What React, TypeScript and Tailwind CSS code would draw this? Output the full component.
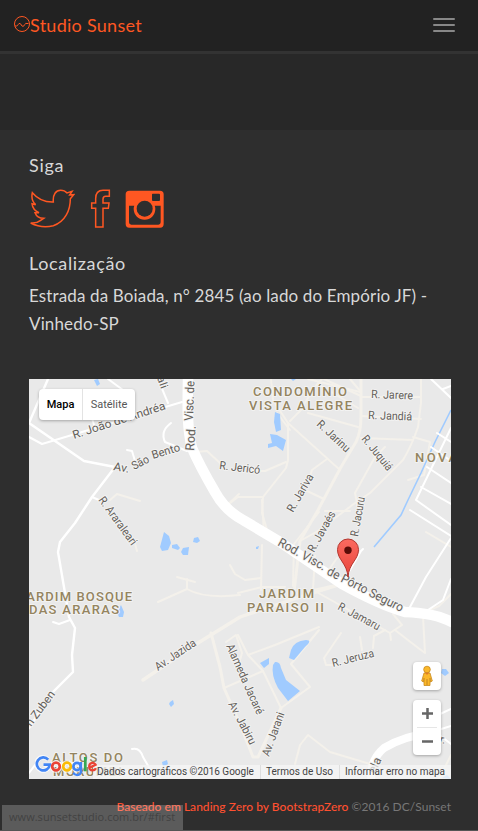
import React from 'react';

type Line = { d: string; w?: number };

const localRoads: Line[] = [
  { d: 'M361 379V417Q361 432 356 442L341 467L318 510L300 541L294 592', w: 3 },
  { d: 'M271 379L273 400L288 423V460L286 468L263 497H238L225 507M263 497L262 513L270 540' },
  { d: 'M288 423L340 470M277 413L290 430' },
  { d: 'M308 379L360 392M300 410L318 383L322 379M308 413L358 427M318 384L358 408M290 421L302 409' },
  { d: 'M421 379V403L418 427Q412 445 403 460L370 493L355 503L318 531L300 541' },
  { d: 'M361 397H421M361 416L421 419M361 438L413 440M413 437L430 442L424 475L408 480' },
  { d: 'M375 457L355 493L358 508M375 457L385 447' },
  { d: 'M327 459L312 470L308 483M305 490L324 499' },
  { d: 'M324 379L361 396M250 471H265L286 462' },
  { d: 'M262 500L264 533M262 545L261 590M319 512L294 544L293 586' },
  { d: 'M325 511H350M315 556L313 590L345 583M328 571L337 558' },
  { d: 'M143 680L198 643L240 617L300 597L345 583', w: 3.4 },
  { d: 'M158 602L187 589Q204 599 240 595M187 589V579M177 577L195 582' },
  { d: 'M230 565L235 574L245 580L261 578M238 593L262 587L285 587' },
  { d: 'M110 500L117 494L140 501M134 540L137 551' },
  { d: 'M195 452L207 451L221 464M225 507L239 494' },
  { d: 'M313 590L390 633L402 625M402 625L393 614M390 633L391 640' },
  { d: 'M423 616L425 653Q422 651 395 630M451 594L439 606L425 612' },
  { d: 'M211 633L220 667L224 688L240 724L253 757H258L281 708', w: 3 },
  { d: 'M224 688L263 671L281 708L310 687L291 664L319 630' },
  { d: 'M238 635L248 655L263 671M248 655L275 645L319 627' },
  { d: 'M226 642L236 635L242 653L238 667' },
  { d: 'M341 633L324 658L326 665H338M360 637L362 650M373 648L374 636L385 630' },
  { d: 'M295 764L300 745L308 735L330 752L370 764' },
  { d: 'M426 532L451 547M439 779L451 755M350 379L361 392' },
];

const cityRoads: Line[] = [
  { d: 'M48 379L29 423L84 461L115 467L92 497L75 523L60 542L58 552L65 593L69 617L75 628L72 655L73 672L53 692L29 728', w: 2.4 },
  { d: 'M29 437L42 444L182 402' },
  { d: 'M108 379L127 393M158 379L168 403M91 415L95 428' },
  { d: 'M171 423Q160 431 165 442L187 451M127 450L132 451L135 461' },
  { d: 'M92 497L99 500M53 622L59 624L70 620' },
  { d: 'M132 749Q140 747 143 757L150 769L160 779M29 773L39 760' },
  { d: 'M431 379L451 398M443 389L451 386' },
  { d: 'M451 428L416 500L451 525M437 433L451 442M431 447L451 461M427 467L451 483M421 487L451 504' },
  { d: 'M410 510L451 536M451 538L426 577L410 607M451 579L443 600L425 612' },
  { d: 'M438 715L451 709M438 730L451 726M438 734L451 744' },
  { d: 'M343 582L361 551L363 549' },
];

const lakes: string[] = [
  'M275 412L280 414L281 430L276 432L274 422Z',
  'M270 434L277 435L286 440L283 451L276 446L268 448L268 444L272 443Z',
  'M291 379H296L293 381Z',
  'M94 380L98 379L100 384L97 386Z',
  'M164 532L169 536L171 543L168 550L162 551L160 547Z',
  'M172 545L177 544L180 548L178 550L172 548Z',
  'M183 548L189 547L188 555H183L181 552Z',
  'M194 538L198 537L200 541L197 543L193 542Z',
  'M121 605L124 612L123 617H119L117 612Z',
  'M256 547L259 546L258 549H256Z',
  'M275 662Q280 661 281 668L286 680L300 691L288 701L278 688Q271 675 273 665Z',
  'M291 650Q294 641 306 640Q313 640 305 647L294 660L289 658Z',
  'M260 663L269 658L269 664L264 668Z',
  'M170 702L173 700L174 704L171 707L169 704Z',
  'M162 762L167 760L168 764L163 767Z',
  'M442 669L446 669L449 673L445 676L441 673Z',
  'M442 778L447 775L451 779Z',
];

type Label = { t: string; x: number; y: number; r?: number; l: number; s?: number };

const streets: Label[] = [
  { t: 'R. João de Andréa', x: 74, y: 439, r: -18, l: 97 },
  { t: 'Av.', x: 113, y: 470, r: 10, l: 16 },
  { t: 'São', x: 134, y: 470, r: -27, l: 18 },
  { t: 'Bento', x: 153, y: 459, r: -17, l: 29 },
  { t: 'R. Jericó', x: 219, y: 469, r: 7, l: 41 },
  { t: 'R. Jarere', x: 371, y: 398, r: 2, l: 42 },
  { t: 'R. Jandiá', x: 368, y: 419, r: 2, l: 44 },
  { t: 'R. Jarinu', x: 316, y: 425, r: 43, l: 41 },
  { t: 'R. Juquiá', x: 361, y: 439, r: 51, l: 42 },
  { t: 'R. Jariva', x: 293, y: 513, r: -60, l: 42 },
  { t: 'R. Javaés', x: 314, y: 553, r: -61, l: 45 },
  { t: 'R. Jacuru', x: 358, y: 537, r: -80, l: 40 },
  { t: 'R. Araraleari', x: 98, y: 500, r: 54, l: 57 },
  { t: 'R. Jamaru', x: 337, y: 609, r: 28, l: 46 },
  { t: 'R. Jeruza', x: 333, y: 667, r: -14, l: 43 },
  { t: 'Av. Jazida', x: 158, y: 671, r: -34, l: 47 },
  { t: 'Alameda Jacaré', x: 226, y: 646, r: 66, l: 76 },
  { t: 'Av. Jabiru', x: 228, y: 704, r: 62, l: 47 },
  { t: 'Av. Jarani', x: 269, y: 757, r: -70, l: 46 },
  { t: 'n Zuben', x: 31, y: 727, r: -53, l: 41 },
  { t: 'Visc. de', x: 193, y: 421, r: -88, l: 40, s: 12.5 },
  { t: 'Rod.', x: 194, y: 451, r: -86, l: 25, s: 12.5 },
  { t: 'Rod. Visc.', x: 277, y: 545, r: 29, l: 53, s: 12.5 },
  { t: 'de Pôrto Seguro', x: 326, y: 574, r: 27, l: 84, s: 12.5 },
];

const districts: Label[] = [
  { t: 'CONDOMÍNIO', x: 253, y: 396, l: 94 },
  { t: 'VISTA ALEGRE', x: 249, y: 409.5, l: 103 },
  { t: 'NOVA', x: 415, y: 462, l: 42 },
  { t: 'JARDIM', x: 259, y: 598, l: 55 },
  { t: 'PARAISO II', x: 247, y: 611.5, l: 77 },
  { t: 'JARDIM BOSQUE', x: 18, y: 600.5, l: 114 },
  { t: 'DAS ARARAS', x: 29, y: 613.5, l: 90 },
  { t: 'ALTOS DO', x: 52, y: 761.5, l: 71 },
  { t: 'MORUMBI', x: 53, y: 775.5, l: 69 },
];

function MapCanvas() {
  return (
    <svg viewBox="29 379 422 400" className="block h-full w-full" fontFamily="Roboto, sans-serif">
      <rect x="29" y="379" width="422" height="400" fill="#e9e9e9" />
      <g fill="none" stroke="#f4f1eb" strokeLinejoin="round" strokeLinecap="round">
        {localRoads.map((r) => <path key={r.d} d={r.d} strokeWidth={r.w ?? 2} />)}
      </g>
      <g fill="#a0cbff">{lakes.map((d) => <path key={d} d={d} />)}</g>
      <path d="M451 410L435 442L421 473L408 500L401 515L374 547" fill="none" stroke="#a0cbff" strokeWidth="1.6" />
      <g fill="none" stroke="#fff" strokeLinejoin="round" strokeLinecap="round">
        {cityRoads.map((r) => <path key={r.d} d={r.d} strokeWidth={r.w ?? 2} />)}
        <path d="M188 377C188 397 186 425 192 448C198 462 208 480 215 492C222 505 232 514 243 520L280 542L342 584Q380 605 405 612Q435 613 452 622" strokeWidth="10.5" />
        <path d="M371 779Q370 760 384 748Q404 736 430 733" strokeWidth="8" />
      </g>
      <g fontSize="11" fill="#64605a" stroke="#f3f3f2" strokeWidth="2" strokeLinejoin="round" paintOrder="stroke">
        {streets.map((s) => (
          <text key={s.t} x={s.x} y={s.y} textLength={s.l} lengthAdjust="spacingAndGlyphs" fontSize={s.s ?? 11.5} transform={`rotate(${s.r ?? 0} ${s.x} ${s.y})`}>{s.t}</text>
        ))}
        <text x="375" y="774" fontSize="12" textLength="16" transform="rotate(-65 375 774)">ela</text>
        <text x="157" y="378" textLength="12" transform="rotate(70 157 378)">ali</text>
        <text x="439" y="742" transform="rotate(20 439 742)">r.</text>
      </g>
      <g fontSize="13" fontWeight="500" fill="#94845f" stroke="#f3f3f2" strokeWidth="2" strokeLinejoin="round" paintOrder="stroke">
        {districts.map((s) => <text key={s.t} x={s.x} y={s.y} textLength={s.l}>{s.t}</text>)}
      </g>
      <defs>
        <linearGradient id="pin" x1="0" y1="0" x2="0" y2="1">
          <stop offset="0" stopColor="#fb6a60" />
          <stop offset="1" stopColor="#e8453c" />
        </linearGradient>
      </defs>
      <path d="M348 577C347 563 337.500 560 337.500 549.500A10.500 10.500 0 0 1 358.500 549.500C358.500 560 349 563 348 577Z" fill="url(#pin)" stroke="#b3362e" />
      <circle cx="348" cy="550.300" r="3.700" fill="#590c08" />
    </svg>
  );
}

function GoogleMark() {
  return (
    <svg viewBox="0 0 64 26" className="h-[26px] w-16" fill="none" strokeWidth="2.700" strokeLinecap="butt">
      <g stroke="#fff" strokeWidth="4.600" opacity=".75">
        <path d="M13 5.500A6.600 6.600 0 1 0 14.600 11H8.500" />
        <circle cx="21" cy="12.500" r="4" /><circle cx="32" cy="12.500" r="4" /><circle cx="42" cy="12.500" r="3.800" />
      </g>
      <path d="M13.200 5.600A6.500 6.500 0 1 0 14.800 10.700H8.500" stroke="#4285f4" />
      <circle cx="21" cy="12.500" r="3.800" stroke="#ea4335" />
      <circle cx="32" cy="12.500" r="3.800" stroke="#fbbc05" />
      <circle cx="42" cy="12.500" r="3.600" stroke="#4285f4" />
      <path d="M46 8V17Q46 21 42 21Q39.500 21 38.300 18.800" stroke="#4285f4" strokeWidth="2.300" />
      <path d="M50.300 3V17.300" stroke="#34a853" />
      <path d="M54 14L60.500 10.700Q59.200 8.700 57.200 8.900Q54.200 9.200 54.200 12.700Q54.400 16.300 57.500 16.300Q60 16.300 61 14.200" stroke="#ea4335" strokeWidth="2.300" />
    </svg>
  );
}

function SocialIcons() {
  return (
    <div className="mt-3 flex h-[39px] text-[#ff5722]">
      <svg viewBox="87 148 138 117" className="h-[39px] w-[46px]" fill="none" stroke="currentColor" strokeWidth="4.500" strokeLinejoin="miter">
        <path d="M160 187C158 164 168 152 182 152Q194 152 201 160L216 155L209 166L221 165L211 177C211 211 196 246 160 258Q125 267 92 250Q109 252 122 242L131 236Q111 235 105 219L117 219Q98 211 96 192L107 195Q92 181 97 159C113 178 133 188 160 187Z" />
      </svg>
      <svg viewBox="270 148 63 117" className="ml-[15px] h-[39px] w-[21px]" fill="none" stroke="currentColor" strokeWidth="4.500">
        <path d="M287 262V206H275V190H287V177Q287 152 309 152H328V170H317Q309 170 309 179V190H327L325 206H309V262Z" />
      </svg>
      <svg viewBox="375 148 120 117" className="ml-3.5 h-[39px] w-10" fill="currentColor">
        <path fillRule="evenodd" d="M388 153H480Q491 153 491 164V253Q491 264 480 264H388Q377 264 377 253V164Q377 153 388 153ZM458 162Q456 162 456 165V181Q456 184 459 184H477Q480 184 480 181V165Q480 162 477 162ZM387 198V248Q387 255 394 255H475Q482 255 482 248V198H464Q466 203 466 207C466 226 452 240 434 240S401 226 401 207Q401 203 403 198Z" />
        <circle cx="434" cy="207" r="24" fill="#2e2e2e" />
      </svg>
    </div>
  );
}

function Pegman() {
  return (
    <svg viewBox="0 0 14 22" className="h-[22px] w-3.5">
      <path d="M4 8H10L12.300 16L10.600 17L10 13V20.500H4V13L3.400 17L1.700 16Z" fill="#fbb829" stroke="#c88a20" strokeWidth=".8" />
      <path d="M7 14V20" stroke="#b8781e" strokeWidth=".8" />
      <path d="M4.500 7H9.500L7 10Z" fill="#e4762a" />
      <circle cx="7" cy="4.500" r="3.300" fill="#fbb829" stroke="#c88a20" strokeWidth=".8" />
    </svg>
  );
}

export default function App() {
  return (
    <div className="relative h-[831px] w-[478px] overflow-hidden bg-[#2e2e2e] font-['Lato',sans-serif] text-[#d8d8d8]">
      <header className="flex h-[54px] items-start justify-between border-b-[3px] border-[#333] bg-[#222] pl-3.5 pr-[23px]">
        <div className="flex text-[#ff5722]">
          <svg viewBox="0 0 16 16" className="mt-4 h-4 w-4" fill="none" stroke="currentColor">
            <circle cx="8" cy="8" r="7.500" />
            <path d="M1 10H2.500Q3.500 10 4.200 8.500T6 7.500Q6.600 7.500 7.300 9T9 10.300Q10 10.300 10.800 8.500T13 7.500H14.500" />
          </svg>
          <span className="mt-3 whitespace-nowrap text-[18px] leading-[26px] tracking-[0.27px]">Studio Sunset</span>
        </div>
        <div className="mt-[18px] flex w-[22px] flex-col gap-1">
          <span className="h-0.5 rounded-[1px] bg-[#888]" />
          <span className="h-0.5 rounded-[1px] bg-[#888]" />
          <span className="h-0.5 rounded-[1px] bg-[#888]" />
        </div>
      </header>
      <div className="h-[76px] bg-[#282828]" />
      <main className="pl-[29px] pr-[27px]">
        <h4 className="pt-[23px] text-[18px] leading-6 tracking-[0.7px]">Siga</h4>
        <SocialIcons />
        <h4 className="mt-[23px] text-[18px] leading-6 tracking-[0.65px]">Localização</h4>
        <p className="mt-[7px] whitespace-nowrap text-[17px] leading-7 tracking-[0.14px]">Estrada da Boiada, n° 2845 (ao lado do Empório JF) -<br />Vinhedo-SP</p>
        <section className="relative mt-[41px] h-[400px] w-[422px] overflow-hidden font-['Roboto',sans-serif]">
          <MapCanvas />
          <div className="absolute left-2.5 top-2.5 flex h-[31px] rounded-sm bg-white text-[11px] leading-[31px] shadow-[0_1px_3px_rgba(0,0,0,0.3)]">
            <div className="w-11 border-r border-[#e3e3e3] text-center font-medium text-black">Mapa</div>
            <div className="w-[52px] text-center text-[#565656]">Satélite</div>
          </div>
          <div className="absolute left-[384px] top-[283px] flex h-7 w-7 items-center justify-center rounded-sm bg-white shadow-[0_1px_3px_rgba(0,0,0,0.3)]"><Pegman /></div>
          <div className="absolute left-[384px] top-[321px] h-[55px] w-7 rounded-sm bg-white shadow-[0_1px_3px_rgba(0,0,0,0.3)]">
            <svg viewBox="0 0 28 55" className="h-full w-full" fill="none" stroke="#666" strokeWidth="2.500">
              <path d="M9 13.500H20M14.500 8V19M9 41.500H20" />
              <path d="M4 27.500H24" stroke="#e6e6e6" strokeWidth="1" />
            </svg>
          </div>
          <div className="absolute bottom-0 right-0 flex h-3.5 bg-[#f5f5f5]/75 text-[10px] leading-[14px] text-[#444]">
            <span className="w-[167px] whitespace-nowrap pl-1">Dados cartográficos ©2016 Google</span>
            <span className="w-[79px] whitespace-nowrap border-l border-[#dedede] pl-[5px]">Termos de Uso</span>
            <span className="w-[112px] whitespace-nowrap border-l border-[#dedede] pl-[5px]">Informar erro no mapa</span>
          </div>
          <div className="absolute bottom-[-1px] left-[6px]"><GoogleMark /></div>
        </section>
        <footer className="mt-[19px] whitespace-nowrap text-right text-[12px] leading-[18px] tracking-[0.03px] text-[#777]"><span className="font-medium text-[#ff5030]">Baseado em Landing Zero by BootstrapZero</span> ©2016 DC/Sunset</footer>
      </main>
      <div className="absolute bottom-px left-0.5 h-[25px] w-[181px] bg-white/22 pl-[7px] font-['Open_Sans',sans-serif] text-[11px] leading-6 tracking-[0.04px] text-[#424242]">www.sunsetstudio.com.br/#first</div>
      <div className="absolute bottom-0 left-0 h-px w-full bg-[#555]" />
    </div>
  );
}
